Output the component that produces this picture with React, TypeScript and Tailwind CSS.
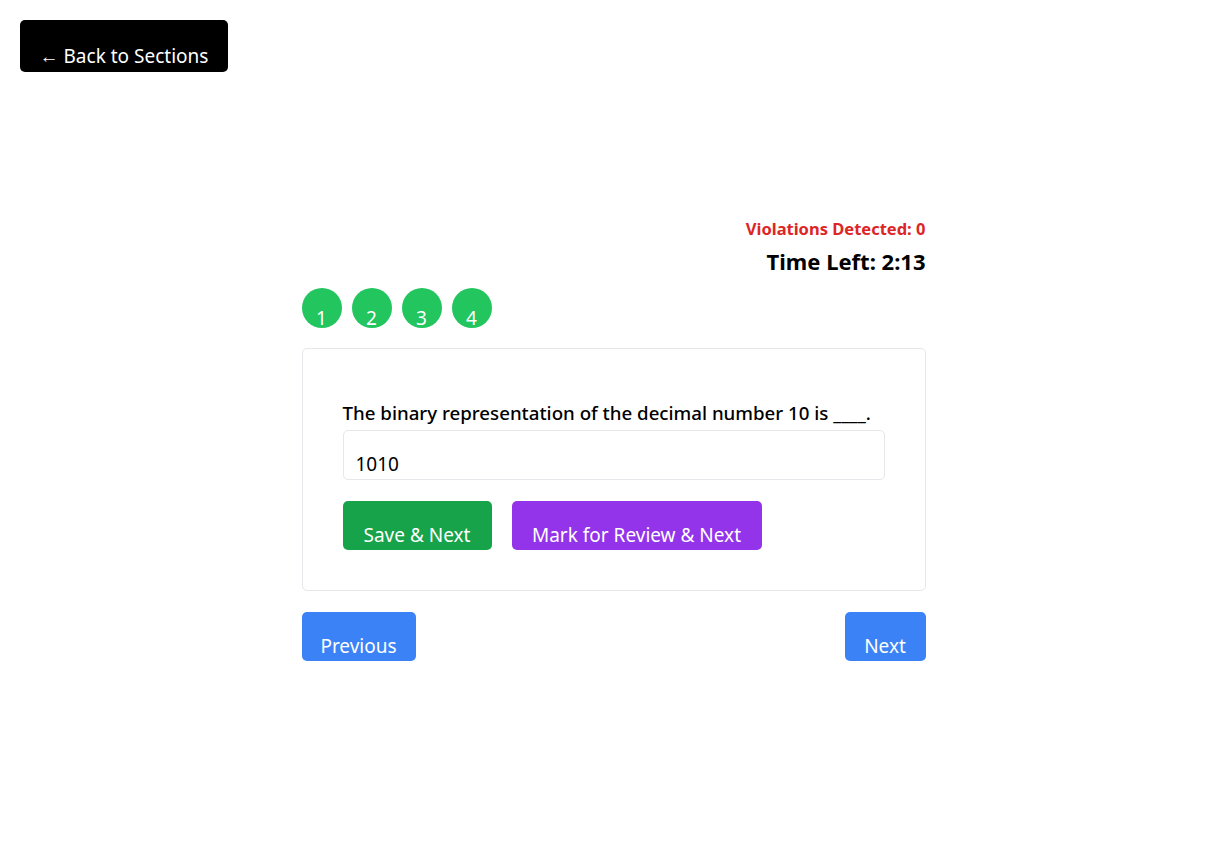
import { useState } from "react"

const font = { fontFamily: '"Noto Sans", "Open Sans", sans-serif' }

export default function App() {
  const [answer, setAnswer] = useState("1010")
  const questions = [1, 2, 3, 4]

  return (
    <div className="min-h-screen bg-white text-black" style={font}>
      <div className="p-5">
        <button className="flex h-[52px] w-[208px] items-start justify-center rounded-[5px] bg-black pt-[23px] text-[19px] leading-[26px] text-white">
          ← Back to Sections
        </button>
      </div>

      <div className="mx-auto mt-[125px] w-[624px]">
        <div className="text-right text-[16.5px] font-bold leading-6 text-[#dc2626]">
          Violations Detected: 0
        </div>
        <div className="mt-[6px] text-right text-[22px] font-bold leading-7">Time Left: 2:13</div>

        <div className="mt-[13px] flex gap-[10px]">
          {questions.map((q) => (
            <button
              key={q}
              className="flex h-10 w-10 items-start justify-center rounded-full bg-[#22c55e] pt-[17px] text-[19px] leading-[26px] text-white"
            >
              {q}
            </button>
          ))}
        </div>

        <div className="mt-5 rounded-[5px] border border-[#e5e7eb] px-10 pt-[51px] pb-10">
          <p className="whitespace-nowrap text-[18.7px] font-medium leading-[26px]">
            The binary representation of the decimal number 10 is ____.
          </p>
          <input
            value={answer}
            onChange={(e) => setAnswer(e.target.value)}
            className="mt-1 block h-[50px] w-full rounded-[5px] border border-[#e5e7eb] px-3 pt-[25px] pb-[7px] text-[19px] outline-none"
          />
          <div className="mt-[21px] flex gap-5">
            <button className="flex h-[49px] w-[149px] items-start justify-center rounded-[5px] bg-[#16a34a] pt-[21px] text-[19px] leading-[26px] text-white">
              Save &amp; Next
            </button>
            <button className="flex h-[49px] w-[250px] items-start justify-center rounded-[5px] bg-[#9333ea] pt-[21px] text-[19px] leading-[26px] text-white">
              Mark for Review &amp; Next
            </button>
          </div>
        </div>

        <div className="mt-[21px] flex justify-between">
          <button className="flex h-[49px] w-[114px] items-start justify-center rounded-[5px] bg-[#3b82f6] pt-[21px] text-[19px] leading-[26px] text-white">
            Previous
          </button>
          <button className="flex h-[49px] w-[81px] items-start justify-center rounded-[5px] bg-[#3b82f6] pt-[21px] text-[19px] leading-[26px] text-white">
            Next
          </button>
        </div>
      </div>
    </div>
  )
}
